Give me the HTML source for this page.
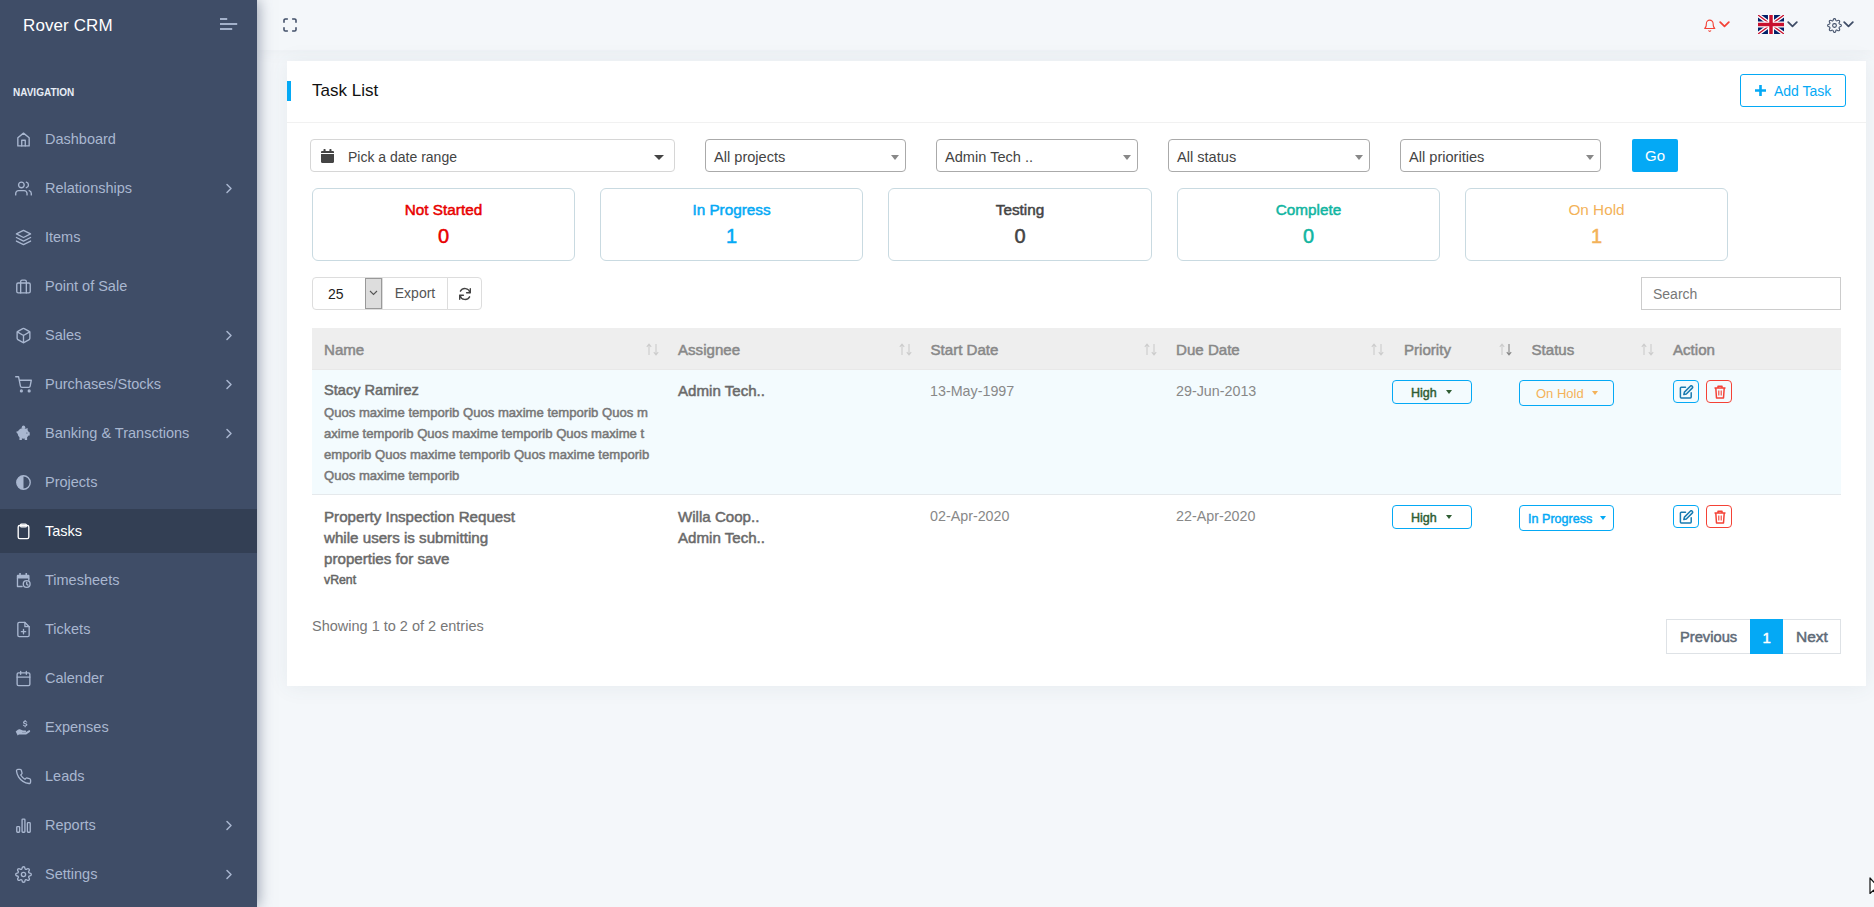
<!DOCTYPE html>
<html><head><meta charset="utf-8">
<style>
*{box-sizing:border-box;margin:0;padding:0}
html,body{width:1874px;height:907px;overflow:hidden}
body{background:#f4f7fa;font-family:"Liberation Sans",sans-serif;position:relative;color:#888}
.abs{position:absolute}
#side{position:absolute;left:0;top:0;width:257px;height:907px;background:#3f4d67;box-shadow:1px 0 14px 0 rgba(63,77,103,0.55);z-index:5}
.brand{position:absolute;left:23px;top:15.5px;font-size:17px;color:#fff;line-height:20px;letter-spacing:0.1px}
.navlbl{position:absolute;left:13px;top:87px;font-size:10px;font-weight:bold;color:#e8edf5;line-height:12px}
.nav{position:absolute;left:0;width:257px;height:44px}
.nav .t{position:absolute;left:45px;top:13.5px;font-size:14.5px;line-height:17px;color:#a9b7d0}
.nav.act{background:#333f54}
.nav.act .t{color:#fff}
.nav svg.ic{position:absolute;left:14.5px;top:13.5px;width:17px;height:17px}
.nav svg.ch{position:absolute;left:225px;top:17px;width:8px;height:11px}
#hdr{position:absolute;left:257px;top:0;width:1617px;height:50px;background:#f4f7fa;box-shadow:0 1px 15px 0 rgba(69,90,100,0.06);z-index:2}
#card{position:absolute;left:287px;top:61px;width:1579px;height:625px;background:#fff;box-shadow:0 1px 20px 0 rgba(69,90,100,0.08);z-index:3}
.ch1{position:absolute;left:0;top:0;width:1579px;height:62px;border-bottom:1px solid #f1f1f1}
.bar{position:absolute;left:0;top:20px;width:4px;height:20px;background:#04a9f5}
.title{position:absolute;left:25px;top:20px;font-size:17px;line-height:20px;color:#111}
.btn-add{position:absolute;left:1453px;top:13px;width:106px;height:33px;border:1px solid #04a9f5;border-radius:3px;color:#04a9f5;font-size:14px}
.sel{position:absolute;top:78px;height:33px;border:1px solid #aaa;border-radius:4px;background:#fff;font-size:14.6px;color:#444}
.sel .t{position:absolute;left:8px;top:9px;line-height:16px}
.sel .car{position:absolute;right:6px;top:15px;width:0;height:0;border-left:4px solid transparent;border-right:4px solid transparent;border-top:5px solid #888}
.box{position:absolute;top:127px;height:73px;border:1px solid #c9dae1;border-radius:6px;text-align:center}
.box .l{position:absolute;left:0;right:0;top:11.5px;font-size:15.3px;line-height:18px;-webkit-text-stroke:0.5px currentColor}
.box .n{position:absolute;left:0;right:0;top:35px;font-size:20px;line-height:24px;-webkit-text-stroke:0.5px currentColor}
</style></head><body>

<div id="side">
  <div class="brand">Rover CRM</div>
  <svg class="abs" style="left:220px;top:17px" width="18" height="15" viewBox="0 0 18 15"><g stroke="#a9b7d0" stroke-width="1.9"><line x1="0" y1="2" x2="7.2" y2="2"/><line x1="0" y1="7" x2="17.2" y2="7"/><line x1="0" y1="12" x2="12.2" y2="12"/></g></svg>
  <div class="navlbl">NAVIGATION</div>
  <div class="nav" style="top:117px"><svg class="ic" viewBox="0 0 24 24" fill="none" stroke="#a9b7d0" stroke-width="1.9" stroke-linecap="round" stroke-linejoin="round"><path d="M4 9.5 12 3l8 6.5V21H4Z"/><path d="M9.5 21v-8h5v8"/></svg><div class="t">Dashboard</div></div>
  <div class="nav" style="top:166px"><svg class="ic" viewBox="0 0 24 24" fill="none" stroke="#a9b7d0" stroke-width="1.9" stroke-linecap="round" stroke-linejoin="round"><path d="M17 21v-2a4 4 0 0 0-4-4H5a4 4 0 0 0-4 4v2"/><circle cx="9" cy="7" r="4"/><path d="M23 21v-2a4 4 0 0 0-3-3.87"/><path d="M16 3.13a4 4 0 0 1 0 7.75"/></svg><div class="t">Relationships</div><svg class="ch" viewBox="0 0 8 11"><path d="M2 1.5 6 5.5 2 9.5" fill="none" stroke="#a9b7d0" stroke-width="1.5" stroke-linecap="round" stroke-linejoin="round"/></svg></div>
  <div class="nav" style="top:215px"><svg class="ic" viewBox="0 0 24 24" fill="none" stroke="#a9b7d0" stroke-width="1.9" stroke-linecap="round" stroke-linejoin="round"><path d="M12 2 2 7l10 5 10-5Z"/><path d="M2 17l10 5 10-5"/><path d="M2 12l10 5 10-5"/></svg><div class="t">Items</div></div>
  <div class="nav" style="top:264px"><svg class="ic" viewBox="0 0 24 24" fill="none" stroke="#a9b7d0" stroke-width="1.9" stroke-linecap="round" stroke-linejoin="round"><rect x="2.5" y="7" width="19" height="14" rx="2"/><path d="M16 21V5a2 2 0 0 0-2-2h-4a2 2 0 0 0-2 2v16"/></svg><div class="t">Point of Sale</div></div>
  <div class="nav" style="top:313px"><svg class="ic" viewBox="0 0 24 24" fill="none" stroke="#a9b7d0" stroke-width="1.9" stroke-linecap="round" stroke-linejoin="round"><path d="M21 16V8a2 2 0 0 0-1-1.73l-7-4a2 2 0 0 0-2 0l-7 4A2 2 0 0 0 3 8v8a2 2 0 0 0 1 1.73l7 4a2 2 0 0 0 2 0l7-4A2 2 0 0 0 21 16z"/><path d="M3.27 6.96 12 12.01l8.73-5.05M12 22.08V12"/></svg><div class="t">Sales</div><svg class="ch" viewBox="0 0 8 11"><path d="M2 1.5 6 5.5 2 9.5" fill="none" stroke="#a9b7d0" stroke-width="1.5" stroke-linecap="round" stroke-linejoin="round"/></svg></div>
  <div class="nav" style="top:362px"><svg class="ic" viewBox="0 0 24 24" fill="none" stroke="#a9b7d0" stroke-width="1.9" stroke-linecap="round" stroke-linejoin="round"><circle cx="9" cy="21" r="1.3"/><circle cx="20" cy="21" r="1.3"/><path d="M1 1h4l2.68 13.39a2 2 0 0 0 2 1.61h9.72a2 2 0 0 0 2-1.61L23 6H6"/></svg><div class="t">Purchases/Stocks</div><svg class="ch" viewBox="0 0 8 11"><path d="M2 1.5 6 5.5 2 9.5" fill="none" stroke="#a9b7d0" stroke-width="1.5" stroke-linecap="round" stroke-linejoin="round"/></svg></div>
  <div class="nav" style="top:411px"><svg class="ic" viewBox="0 0 24 24" fill="none" stroke="#a9b7d0" stroke-width="1.9" stroke-linecap="round" stroke-linejoin="round"><path fill="#a9b7d0" stroke="none" d="M2.2 9.3c.3-.6 1-.8 1.6-.5l.4.3c.3-.9.9-1.8 1.7-2.5 1.5-1.2 3.5-1.9 5.8-1.9 1.3 0 2.5.2 3.6.7l2.5-1.3v3.4c.8.8 1.4 1.7 1.7 2.7h1.3v4.6h-1.7c-.5.9-1.2 1.7-2 2.3V21h-3.4v-1.8c-.6.1-1.3.2-2 .2s-1.4-.1-2-.2V21H6.3v-3.6C4.9 16.2 4 14.6 4 12.8v-.3l-.8-.5c-.9-.6-1.3-1.7-1-2.7Z"/><circle fill="#a9b7d0" stroke="none" cx="12" cy="3.2" r="2.4"/><circle fill="#3f4d67" stroke="none" cx="16.8" cy="11.3" r=".8"/></svg><div class="t">Banking &amp; Transctions</div><svg class="ch" viewBox="0 0 8 11"><path d="M2 1.5 6 5.5 2 9.5" fill="none" stroke="#a9b7d0" stroke-width="1.5" stroke-linecap="round" stroke-linejoin="round"/></svg></div>
  <div class="nav" style="top:460px"><svg class="ic" viewBox="0 0 24 24" fill="none" stroke="#a9b7d0" stroke-width="1.9" stroke-linecap="round" stroke-linejoin="round"><circle cx="12" cy="12" r="9.5"/><path fill="#a9b7d0" stroke="none" d="M12 2.5a9.5 9.5 0 0 0 0 19Z"/></svg><div class="t">Projects</div></div>
  <div class="nav act" style="top:509px"><svg class="ic" viewBox="0 0 24 24" fill="none" stroke="#fff" stroke-width="1.9" stroke-linecap="round" stroke-linejoin="round"><rect x="4.5" y="3.5" width="15" height="18.5" rx="2.2"/><rect x="8" y="1.5" width="8" height="4" rx="1.2"/></svg><div class="t">Tasks</div></div>
  <div class="nav" style="top:558px"><svg class="ic" viewBox="0 0 24 24" fill="none" stroke="#a9b7d0" stroke-width="1.9" stroke-linecap="round" stroke-linejoin="round"><path fill="#a9b7d0" stroke="none" d="M4 4h15a1.5 1.5 0 0 1 1.5 1.5V9H2.5V5.5A1.5 1.5 0 0 1 4 4ZM6 1.5h2.2V5H6zM14.8 1.5H17V5h-2.2z"/><path d="M3.5 9v11.5H10"/><path d="M19.5 9v2.5"/><circle cx="16.5" cy="17" r="4.8"/><path d="M16.5 14.5v2.8l1.8 1.2"/></svg><div class="t">Timesheets</div></div>
  <div class="nav" style="top:607px"><svg class="ic" viewBox="0 0 24 24" fill="none" stroke="#a9b7d0" stroke-width="1.9" stroke-linecap="round" stroke-linejoin="round"><path d="M14 2H6a2 2 0 0 0-2 2v16a2 2 0 0 0 2 2h12a2 2 0 0 0 2-2V8z"/><path d="M14 2v6h6M12 18v-6M9 15h6"/></svg><div class="t">Tickets</div></div>
  <div class="nav" style="top:656px"><svg class="ic" viewBox="0 0 24 24" fill="none" stroke="#a9b7d0" stroke-width="1.9" stroke-linecap="round" stroke-linejoin="round"><rect x="3" y="4" width="18" height="18" rx="2"/><path d="M16 2v4M8 2v4M3 10h18"/></svg><div class="t">Calender</div></div>
  <div class="nav" style="top:705px"><svg class="ic" viewBox="0 0 24 24" fill="none" stroke="#a9b7d0" stroke-width="1.9" stroke-linecap="round" stroke-linejoin="round"><path fill="#a9b7d0" stroke="none" d="M1 17.5 4 15c.8-.7 1.9-.9 2.9-.5l4.3 1.6h3.1c.8 0 1.4.6 1.4 1.3s-.6 1.3-1.4 1.3H10l-.1.5h4.6l4.7-3.1c.7-.5 1.5-.3 2 .3.4.6.3 1.4-.3 1.8L15.8 22H5.5L3.8 23.3Z"/><path fill="#a9b7d0" stroke="none" d="M13.5 1.5h1.6v1.3c1.3.2 2.2.9 2.3 2h-1.5c-.1-.5-.6-.8-1.4-.8-.8 0-1.3.3-1.3.8 0 1.3 4.3.6 4.3 3.4 0 1.1-.9 1.9-2.4 2v1.3h-1.6v-1.3c-1.5-.2-2.4-1-2.5-2.1h1.5c.1.6.7 1 1.7 1s1.4-.4 1.4-.9c0-1.4-4.3-.6-4.3-3.4 0-1 .8-1.7 2.2-1.9Z"/></svg><div class="t">Expenses</div></div>
  <div class="nav" style="top:754px"><svg class="ic" viewBox="0 0 24 24" fill="none" stroke="#a9b7d0" stroke-width="1.9" stroke-linecap="round" stroke-linejoin="round"><path d="M22 16.92v3a2 2 0 0 1-2.18 2 19.79 19.79 0 0 1-8.63-3.07 19.5 19.5 0 0 1-6-6 19.79 19.79 0 0 1-3.07-8.67A2 2 0 0 1 4.11 2h3a2 2 0 0 1 2 1.72 12.84 12.84 0 0 0 .7 2.81 2 2 0 0 1-.45 2.11L8.09 9.91a16 16 0 0 0 6 6l1.27-1.27a2 2 0 0 1 2.11-.45 12.84 12.84 0 0 0 2.81.7A2 2 0 0 1 22 16.92z"/></svg><div class="t">Leads</div></div>
  <div class="nav" style="top:803px"><svg class="ic" viewBox="0 0 24 24" fill="none" stroke="#a9b7d0" stroke-width="1.9" stroke-linecap="round" stroke-linejoin="round"><rect x="2.5" y="13.5" width="4" height="8" rx="1"/><rect x="10" y="3" width="4" height="18.5" rx="1"/><rect x="17.5" y="8" width="4" height="13.5" rx="1"/></svg><div class="t">Reports</div><svg class="ch" viewBox="0 0 8 11"><path d="M2 1.5 6 5.5 2 9.5" fill="none" stroke="#a9b7d0" stroke-width="1.5" stroke-linecap="round" stroke-linejoin="round"/></svg></div>
  <div class="nav" style="top:852px"><svg class="ic" viewBox="0 0 24 24" fill="none" stroke="#a9b7d0" stroke-width="1.9" stroke-linecap="round" stroke-linejoin="round"><circle cx="12" cy="12" r="3"/><path d="M19.4 15a1.65 1.65 0 0 0 .33 1.82l.06.06a2 2 0 0 1 0 2.83 2 2 0 0 1-2.83 0l-.06-.06a1.65 1.65 0 0 0-1.820-.33 1.65 1.65 0 0 0-1 1.51V21a2 2 0 0 1-2 2 2 2 0 0 1-2-2v-.09A1.65 1.65 0 0 0 9 19.4a1.65 1.65 0 0 0-1.82.33l-.06.06a2 2 0 0 1-2.83 0 2 2 0 0 1 0-2.830l.06-.06a1.65 1.65 0 0 0 .33-1.82 1.65 1.65 0 0 0-1.51-1H3a2 2 0 0 1-2-2 2 2 0 0 1 2-2h.09A1.65 1.65 0 0 0 4.6 9a1.65 1.65 0 0 0-.33-1.82l-.06-.06a2 2 0 0 1 0-2.83 2 2 0 0 1 2.83 0l.06.06a1.65 1.65 0 0 0 1.82.33H9a1.65 1.65 0 0 0 1-1.51V3a2 2 0 0 1 2-2 2 2 0 0 1 2 2v.09a1.65 1.65 0 0 0 1 1.51 1.65 1.65 0 0 0 1.82-.33l.06-.06a2 2 0 0 1 2.83 0 2 2 0 0 1 0 2.83l-.06.06a1.65 1.65 0 0 0-.33 1.82V9a1.65 1.65 0 0 0 1.51 1H21a2 2 0 0 1 2 2 2 2 0 0 1-2 2h-.09a1.65 1.65 0 0 0-1.51 1z"/></svg><div class="t">Settings</div><svg class="ch" viewBox="0 0 8 11"><path d="M2 1.5 6 5.5 2 9.5" fill="none" stroke="#a9b7d0" stroke-width="1.5" stroke-linecap="round" stroke-linejoin="round"/></svg></div>
</div>

<div id="hdr">
  <svg class="abs" style="left:25px;top:16.8px" width="16" height="16" viewBox="0 0 24 24" fill="none" stroke="#3f4d67" stroke-width="2.3" stroke-linecap="round" stroke-linejoin="round"><path d="M8 3H5a2 2 0 0 0-2 2v3m18 0V5a2 2 0 0 0-2-2h-3m0 18h3a2 2 0 0 0 2-2v-3M3 16v3a2 2 0 0 0 2 2h3"/></svg>
  <svg class="abs" style="left:1446px;top:19px" width="13.5" height="13.5" viewBox="0 0 24 24" fill="none" stroke="#f44236" stroke-width="1.9" stroke-linecap="round" stroke-linejoin="round"><path d="M18 8A6 6 0 0 0 6 8c0 7-3 9-3 9h18s-3-2-3-9"/><path d="M13.73 21a2 2 0 0 1-3.46 0"/></svg>
  <svg class="abs" style="left:1462px;top:21px" width="11" height="7" viewBox="0 0 11 7" fill="none" stroke="#f44236" stroke-width="1.8" stroke-linecap="round" stroke-linejoin="round"><path d="M1.2 1.2 5.5 5.3 9.8 1.2"/></svg>
  <svg class="abs" style="left:1501px;top:15px" width="26" height="19" viewBox="0 0 60 44" preserveAspectRatio="none"><rect width="60" height="44" fill="#012169"/><path d="M0 0 60 44M60 0 0 44" stroke="#fff" stroke-width="9"/><path d="M0 0 60 44M60 0 0 44" stroke="#C8102E" stroke-width="3"/><path d="M30 0v44M0 22h60" stroke="#fff" stroke-width="14"/><path d="M30 0v44M0 22h60" stroke="#C8102E" stroke-width="8"/></svg>
  <svg class="abs" style="left:1530px;top:21px" width="11" height="7" viewBox="0 0 11 7" fill="none" stroke="#3f4d67" stroke-width="1.8" stroke-linecap="round" stroke-linejoin="round"><path d="M1.2 1.2 5.5 5.3 9.8 1.2"/></svg>
  <svg class="abs" style="left:1569.5px;top:17.5px" width="15" height="15" viewBox="0 0 24 24" fill="none" stroke="#3f4d67" stroke-width="1.7" stroke-linecap="round" stroke-linejoin="round"><circle cx="12" cy="12" r="3"/><path d="M19.4 15a1.65 1.65 0 0 0 .33 1.82l.06.06a2 2 0 0 1 0 2.83 2 2 0 0 1-2.83 0l-.06-.06a1.65 1.65 0 0 0-1.82-.33 1.65 1.65 0 0 0-1 1.51V21a2 2 0 0 1-2 2 2 2 0 0 1-2-2v-.09A1.65 1.65 0 0 0 9 19.4a1.65 1.65 0 0 0-1.82.33l-.06.06a2 2 0 0 1-2.83 0 2 2 0 0 1 0-2.83l.06-.06a1.65 1.65 0 0 0 .33-1.82 1.65 1.65 0 0 0-1.51-1H3a2 2 0 0 1-2-2 2 2 0 0 1 2-2h.09A1.650 1.65 0 0 0 4.6 9a1.65 1.65 0 0 0-.33-1.82l-.06-.06a2 2 0 0 1 0-2.83 2 2 0 0 1 2.83 0l.06.06a1.65 1.65 0 0 0 1.82.33H9a1.65 1.65 0 0 0 1-1.51V3a2 2 0 0 1 2-2 2 2 0 0 1 2 2v.09a1.65 1.65 0 0 0 1 1.51 1.65 1.65 0 0 0 1.82-.33l.06-.06a2 2 0 0 1 2.83 0 2 2 0 0 1 0 2.83l-.06.06a1.65 1.65 0 0 0-.33 1.82V9a1.65 1.65 0 0 0 1.51 1H21a2 2 0 0 1 2 2 2 2 0 0 1-2 2h-.09a1.65 1.65 0 0 0-1.51 1z"/></svg>
  <svg class="abs" style="left:1586px;top:21px" width="11" height="7" viewBox="0 0 11 7" fill="none" stroke="#3f4d67" stroke-width="1.8" stroke-linecap="round" stroke-linejoin="round"><path d="M1.2 1.2 5.5 5.3 9.8 1.2"/></svg>
</div>

<div id="card">
  <div class="ch1"><div class="bar"></div><div class="title">Task List</div>
  <div class="btn-add"><svg class="abs" style="left:13px;top:9px" width="13" height="13" viewBox="0 0 13 13"><path d="M6.5 1v11M1 6.5h11" stroke="#04a9f5" stroke-width="2.6"/></svg><div class="abs" style="left:33px;top:8px;line-height:17px">Add Task</div></div></div>
  <div class="sel" style="left:23px;width:365px;border-color:#d6d6d6"><svg class="abs" style="left:10px;top:9px" width="13" height="14" viewBox="0 0 13 14"><path fill="#444" d="M0 5h13v7.8c0 .7-.5 1.2-1.2 1.2H1.2C.5 14 0 13.5 0 12.8ZM0 4V3.2C0 2.5.5 2 1.2 2H2.5V.6c0-.3.3-.6.6-.6h.9c.3 0 .6.3.6.6V2h3.8V.6c0-.3.3-.6.6-.6h.9c.3 0 .6.3.6.6V2h1.3c.7 0 1.2.5 1.2 1.2V4Z"/></svg><div class="t" style="left:37px;font-size:14px">Pick a date range</div><div class="car" style="right:10px;top:15px;border-left-width:5px;border-right-width:5px;border-top:5px solid #444"></div></div>
  <div class="sel" style="left:418px;width:201px"><div class="t">All projects</div><div class="car"></div></div>
  <div class="sel" style="left:649px;width:202px"><div class="t">Admin Tech ..</div><div class="car"></div></div>
  <div class="sel" style="left:881px;width:202px"><div class="t">All status</div><div class="car"></div></div>
  <div class="sel" style="left:1113px;width:201px"><div class="t">All priorities</div><div class="car"></div></div>
  <div class="abs" style="left:1345px;top:78px;width:46px;height:33px;background:#04a9f5;border-radius:2px;color:#fff;font-size:15px;text-align:center;line-height:33px">Go</div>

  <div class="box" style="left:25px;width:263px"><div class="l" style="color:#e80000">Not Started</div><div class="n" style="color:#e80000">0</div></div>
  <div class="box" style="left:313px;width:263px"><div class="l" style="color:#04a9f5">In Progress</div><div class="n" style="color:#04a9f5">1</div></div>
  <div class="box" style="left:601px;width:264px"><div class="l" style="color:#444">Testing</div><div class="n" style="color:#444">0</div></div>
  <div class="box" style="left:890px;width:263px"><div class="l" style="color:#11b5a1">Complete</div><div class="n" style="color:#11b5a1">0</div></div>
  <div class="box" style="left:1178px;width:263px"><div class="l" style="color:#f3b259;-webkit-text-stroke:0">On Hold</div><div class="n" style="color:#f3b259">1</div></div>

  <!-- table controls -->
  <div class="abs" style="left:25px;top:216px;width:71px;height:33px;border:1px solid #ddd;border-radius:4px 0 0 4px;background:#fff"><div class="abs" style="left:15px;top:8px;font-size:14px;line-height:16px;color:#222">25</div><div class="abs" style="left:52px;top:0;width:17px;height:31px;background:#ddd;border:1px solid #999"><svg class="abs" style="left:3px;top:11px" width="9" height="6" viewBox="0 0 9 6"><path d="M1 1l3.5 3.5L8 1" fill="none" stroke="#555" stroke-width="1.1"/></svg></div></div>
  <div class="abs" style="left:95px;top:216px;width:66px;height:33px;border:1px solid #ddd;background:#fff;font-size:14px;color:#555;text-align:center;line-height:31px">Export</div>
  <div class="abs" style="left:160px;top:216px;width:35px;height:33px;border:1px solid #ddd;border-radius:0 4px 4px 0;background:#fff"><svg class="abs" style="left:10px;top:9px" width="14" height="14" viewBox="0 0 14 14" fill="none" stroke="#444" stroke-width="1.4" stroke-linecap="round"><path d="M12 5.5A5.2 5.2 0 0 0 2.4 4.2"/><path d="M2 8.5a5.2 5.2 0 0 0 9.6 1.3"/><path d="M12.3 1.8v3.9H8.6" stroke-linejoin="round"/><path d="M1.7 12.2V8.3h3.7" stroke-linejoin="round"/></svg></div>
  <div class="abs" style="left:1354px;top:216px;width:200px;height:33px;border:1px solid #ccc;background:#fff"><div class="abs" style="left:11px;top:8px;font-size:14px;line-height:16px;color:#777">Search</div></div>

  <!-- table -->
  <div class="abs" style="left:25px;top:267px;width:1529px;height:42px;background:#eee;border-bottom:1px solid #e8e8e8"></div>
  <div class="abs" style="left:25px;top:309px;width:1529px;height:125px;background:#f3fbfe;border-bottom:1px solid #e5e9ec"></div>
<!--TABLE-->
<div class="abs" style="left:37.0px;top:279.6px;font-size:15.1px;line-height:17px;color:#888;white-space:nowrap;-webkit-text-stroke:0.5px #888;">Name</div>
<div class="abs" style="left:391.0px;top:279.6px;font-size:15.1px;line-height:17px;color:#888;white-space:nowrap;-webkit-text-stroke:0.5px #888;">Assignee</div>
<div class="abs" style="left:643.5px;top:279.6px;font-size:15.1px;line-height:17px;color:#888;white-space:nowrap;-webkit-text-stroke:0.5px #888;">Start Date</div>
<div class="abs" style="left:889.0px;top:279.6px;font-size:15.1px;line-height:17px;color:#888;white-space:nowrap;-webkit-text-stroke:0.5px #888;">Due Date</div>
<div class="abs" style="left:1117.0px;top:279.6px;font-size:15.1px;line-height:17px;color:#888;white-space:nowrap;-webkit-text-stroke:0.5px #888;">Priority</div>
<div class="abs" style="left:1244.5px;top:279.6px;font-size:15.1px;line-height:17px;color:#888;white-space:nowrap;-webkit-text-stroke:0.5px #888;">Status</div>
<div class="abs" style="left:1386.0px;top:279.6px;font-size:15.1px;line-height:17px;color:#888;white-space:nowrap;-webkit-text-stroke:0.5px #888;">Action</div>
<svg class="abs" style="left:358.5px;top:282px" width="13" height="13" viewBox="0 0 13 13" fill="none" stroke-width="1.1"><path d="M3 12V1.5M0.8 3.8 3 1.2l2.2 2.6" stroke="#ccc"/><path d="M10 1v10.5M7.8 9.2 10 11.8l2.2-2.6" stroke="#ccc"/></svg>
<svg class="abs" style="left:611.7px;top:282px" width="13" height="13" viewBox="0 0 13 13" fill="none" stroke-width="1.1"><path d="M3 12V1.5M0.8 3.8 3 1.2l2.2 2.6" stroke="#ccc"/><path d="M10 1v10.5M7.8 9.2 10 11.8l2.2-2.6" stroke="#ccc"/></svg>
<svg class="abs" style="left:856.5999999999999px;top:282px" width="13" height="13" viewBox="0 0 13 13" fill="none" stroke-width="1.1"><path d="M3 12V1.5M0.8 3.8 3 1.2l2.2 2.6" stroke="#ccc"/><path d="M10 1v10.5M7.8 9.2 10 11.8l2.2-2.6" stroke="#ccc"/></svg>
<svg class="abs" style="left:1084px;top:282px" width="13" height="13" viewBox="0 0 13 13" fill="none" stroke-width="1.1"><path d="M3 12V1.5M0.8 3.8 3 1.2l2.2 2.6" stroke="#ccc"/><path d="M10 1v10.5M7.8 9.2 10 11.8l2.2-2.6" stroke="#ccc"/></svg>
<svg class="abs" style="left:1211.7px;top:282px" width="13" height="13" viewBox="0 0 13 13" fill="none" stroke-width="1.1"><path d="M3 12V1.5M0.8 3.8 3 1.2l2.2 2.6" stroke="#ccc"/><path d="M10 1v10.5M7.8 9.2 10 11.8l2.2-2.6" stroke="#888"/></svg>
<svg class="abs" style="left:1353.5px;top:282px" width="13" height="13" viewBox="0 0 13 13" fill="none" stroke-width="1.1"><path d="M3 12V1.5M0.8 3.8 3 1.2l2.2 2.6" stroke="#ccc"/><path d="M10 1v10.5M7.8 9.2 10 11.8l2.2-2.6" stroke="#ccc"/></svg>
<div class="abs" style="left:37.0px;top:321.0px;font-size:14.6px;line-height:17px;color:#6a6a6a;white-space:nowrap;-webkit-text-stroke:0.5px #6a6a6a;">Stacy Ramirez</div>
<div class="abs" style="left:37.0px;top:344.0px;font-size:13.1px;line-height:15px;color:#777;white-space:nowrap;-webkit-text-stroke:0.5px #777;">Quos maxime temporib Quos maxime temporib Quos m</div>
<div class="abs" style="left:37.0px;top:364.8px;font-size:13.1px;line-height:15px;color:#777;white-space:nowrap;-webkit-text-stroke:0.5px #777;">axime temporib Quos maxime temporib Quos maxime t</div>
<div class="abs" style="left:37.0px;top:385.7px;font-size:13.1px;line-height:15px;color:#777;white-space:nowrap;-webkit-text-stroke:0.5px #777;">emporib Quos maxime temporib Quos maxime temporib</div>
<div class="abs" style="left:37.0px;top:406.6px;font-size:13.1px;line-height:15px;color:#777;white-space:nowrap;-webkit-text-stroke:0.5px #777;">Quos maxime temporib</div>
<div class="abs" style="left:391.0px;top:320.9px;font-size:15.1px;line-height:17px;color:#6a6a6a;white-space:nowrap;-webkit-text-stroke:0.5px #6a6a6a;">Admin Tech..</div>
<div class="abs" style="left:643.0px;top:321.6px;font-size:14.3px;line-height:16px;color:#888;white-space:nowrap;">13-May-1997</div>
<div class="abs" style="left:889.0px;top:321.6px;font-size:14.3px;line-height:16px;color:#888;white-space:nowrap;">29-Jun-2013</div>
<div class="abs" style="left:37.0px;top:446.5px;font-size:15.15px;line-height:17px;color:#6a6a6a;white-space:nowrap;-webkit-text-stroke:0.5px #6a6a6a;">Property Inspection Request</div>
<div class="abs" style="left:37.0px;top:467.5px;font-size:15.15px;line-height:17px;color:#6a6a6a;white-space:nowrap;-webkit-text-stroke:0.5px #6a6a6a;">while users is submitting</div>
<div class="abs" style="left:37.0px;top:488.5px;font-size:15.15px;line-height:17px;color:#6a6a6a;white-space:nowrap;-webkit-text-stroke:0.5px #6a6a6a;">properties for save</div>
<div class="abs" style="left:37.0px;top:511.9px;font-size:12.3px;line-height:14px;color:#666;white-space:nowrap;-webkit-text-stroke:0.5px #666;">vRent</div>
<div class="abs" style="left:391.0px;top:446.5px;font-size:15.1px;line-height:17px;color:#6a6a6a;white-space:nowrap;-webkit-text-stroke:0.5px #6a6a6a;">Willa Coop..</div>
<div class="abs" style="left:391.0px;top:467.5px;font-size:15.1px;line-height:17px;color:#6a6a6a;white-space:nowrap;-webkit-text-stroke:0.5px #6a6a6a;">Admin Tech..</div>
<div class="abs" style="left:643.0px;top:447.2px;font-size:14.3px;line-height:16px;color:#888;white-space:nowrap;">02-Apr-2020</div>
<div class="abs" style="left:889.0px;top:447.2px;font-size:14.3px;line-height:16px;color:#888;white-space:nowrap;">22-Apr-2020</div>
<div class="abs" style="left:1105px;top:319px;width:80px;height:24px;border:1.3px solid #04a9f5;border-radius:4px"><div class="abs" style="left:18px;top:4.6px;font-size:12.5px;line-height:14px;color:#2f5d33;white-space:nowrap;-webkit-text-stroke:0.45px #2f5d33;">High</div><div class="abs" style="right:19px;top:9.0px;width:0;height:0;border-left:3.5px solid transparent;border-right:3.5px solid transparent;border-top:4px solid #2f5d33"></div></div>
<div class="abs" style="left:1232px;top:319px;width:95px;height:26px;border:1.3px solid #04a9f5;border-radius:4px"><div class="abs" style="left:16px;top:5.3px;font-size:13px;line-height:15px;color:#f3b259;white-space:nowrap;">On Hold</div><div class="abs" style="right:15px;top:10.0px;width:0;height:0;border-left:3.5px solid transparent;border-right:3.5px solid transparent;border-top:4px solid #f3b259"></div></div>
<div class="abs" style="left:1105px;top:444px;width:80px;height:24px;border:1.3px solid #04a9f5;border-radius:4px"><div class="abs" style="left:18px;top:4.6px;font-size:12.5px;line-height:14px;color:#2f5d33;white-space:nowrap;-webkit-text-stroke:0.45px #2f5d33;">High</div><div class="abs" style="right:19px;top:9.0px;width:0;height:0;border-left:3.5px solid transparent;border-right:3.5px solid transparent;border-top:4px solid #2f5d33"></div></div>
<div class="abs" style="left:1232px;top:444px;width:95px;height:26px;border:1.3px solid #04a9f5;border-radius:4px"><div class="abs" style="left:8px;top:5.6px;font-size:12.6px;line-height:14px;color:#04a9f5;white-space:nowrap;-webkit-text-stroke:0.45px #04a9f5;">In Progress</div><div class="abs" style="right:7px;top:10.0px;width:0;height:0;border-left:3.5px solid transparent;border-right:3.5px solid transparent;border-top:4px solid #04a9f5"></div></div>
<div class="abs" style="left:1386px;top:319px;width:26px;height:23px;border:1.3px solid #04a9f5;border-radius:4px"><svg class="abs" style="left:5px;top:4px" width="15" height="14" viewBox="0 0 15 14" fill="none" stroke="#1a7bb0" stroke-width="1.5" stroke-linecap="round" stroke-linejoin="round"><path d="M6.5 2.2H2.3c-.5 0-.9.4-.9.9v9c0 .5.4.9.9.9h9c.5 0 .9-.4.9-.9V7.8"/><path d="M11.3 1.2a1.3 1.3 0 0 1 1.9 1.9L7.3 9 4.8 9.6l.6-2.5Z"/></svg></div>
<div class="abs" style="left:1419px;top:319px;width:26px;height:23px;border:1.3px solid #f44236;border-radius:4px"><svg class="abs" style="left:6px;top:3px" width="14" height="16" viewBox="0 0 14 16" fill="none" stroke="#f44236" stroke-width="1.5" stroke-linejoin="round"><path d="M1.5 4h11"/><path d="M5 4V2.2h4V4"/><path d="M2.8 4l.7 10h7l.7-10"/><path d="M5.8 6.5v5M8.2 6.5v5" stroke-width="1.1"/></svg></div>
<div class="abs" style="left:1386px;top:444px;width:26px;height:23px;border:1.3px solid #04a9f5;border-radius:4px"><svg class="abs" style="left:5px;top:4px" width="15" height="14" viewBox="0 0 15 14" fill="none" stroke="#1a7bb0" stroke-width="1.5" stroke-linecap="round" stroke-linejoin="round"><path d="M6.5 2.2H2.3c-.5 0-.9.4-.9.9v9c0 .5.4.9.9.9h9c.5 0 .9-.4.9-.9V7.8"/><path d="M11.3 1.2a1.3 1.3 0 0 1 1.9 1.9L7.3 9 4.8 9.6l.6-2.5Z"/></svg></div>
<div class="abs" style="left:1419px;top:444px;width:26px;height:23px;border:1.3px solid #f44236;border-radius:4px"><svg class="abs" style="left:6px;top:3px" width="14" height="16" viewBox="0 0 14 16" fill="none" stroke="#f44236" stroke-width="1.5" stroke-linejoin="round"><path d="M1.5 4h11"/><path d="M5 4V2.2h4V4"/><path d="M2.8 4l.7 10h7l.7-10"/><path d="M5.8 6.5v5M8.2 6.5v5" stroke-width="1.1"/></svg></div>
<div class="abs" style="left:25.0px;top:556.9px;font-size:14.5px;line-height:17px;color:#777;white-space:nowrap;">Showing 1 to 2 of 2 entries</div>
<div class="abs" style="left:1379px;top:558px;width:175px;height:35px;border:1px solid #dee2e6;background:#fff"></div>
<div class="abs" style="left:1463px;top:558px;width:33px;height:35px;background:#04a9f5"></div>
<div class="abs" style="left:1393.0px;top:568.4px;font-size:14.7px;line-height:17px;color:#5f6b78;white-space:nowrap;-webkit-text-stroke:0.5px #5f6b78;">Previous</div>
<div class="abs" style="left:1475.5px;top:568.3px;font-size:15px;line-height:17px;color:#fff;white-space:nowrap;-webkit-text-stroke:0.5px #fff;">1</div>
<div class="abs" style="left:1509.0px;top:566.9px;font-size:15.5px;line-height:18px;color:#5f6b78;white-space:nowrap;-webkit-text-stroke:0.5px #5f6b78;">Next</div>
<!--/TABLE-->
</div>

<svg class="abs" style="left:1869px;top:877px;z-index:10" width="12" height="19" viewBox="0 0 12 19"><path d="M1 1v15.5l3.6-3.4 2.3 5.2 2.2-1-2.3-5h4.8Z" fill="#fff" stroke="#111" stroke-width="1.2" stroke-linejoin="round"/></svg>
</body></html>
